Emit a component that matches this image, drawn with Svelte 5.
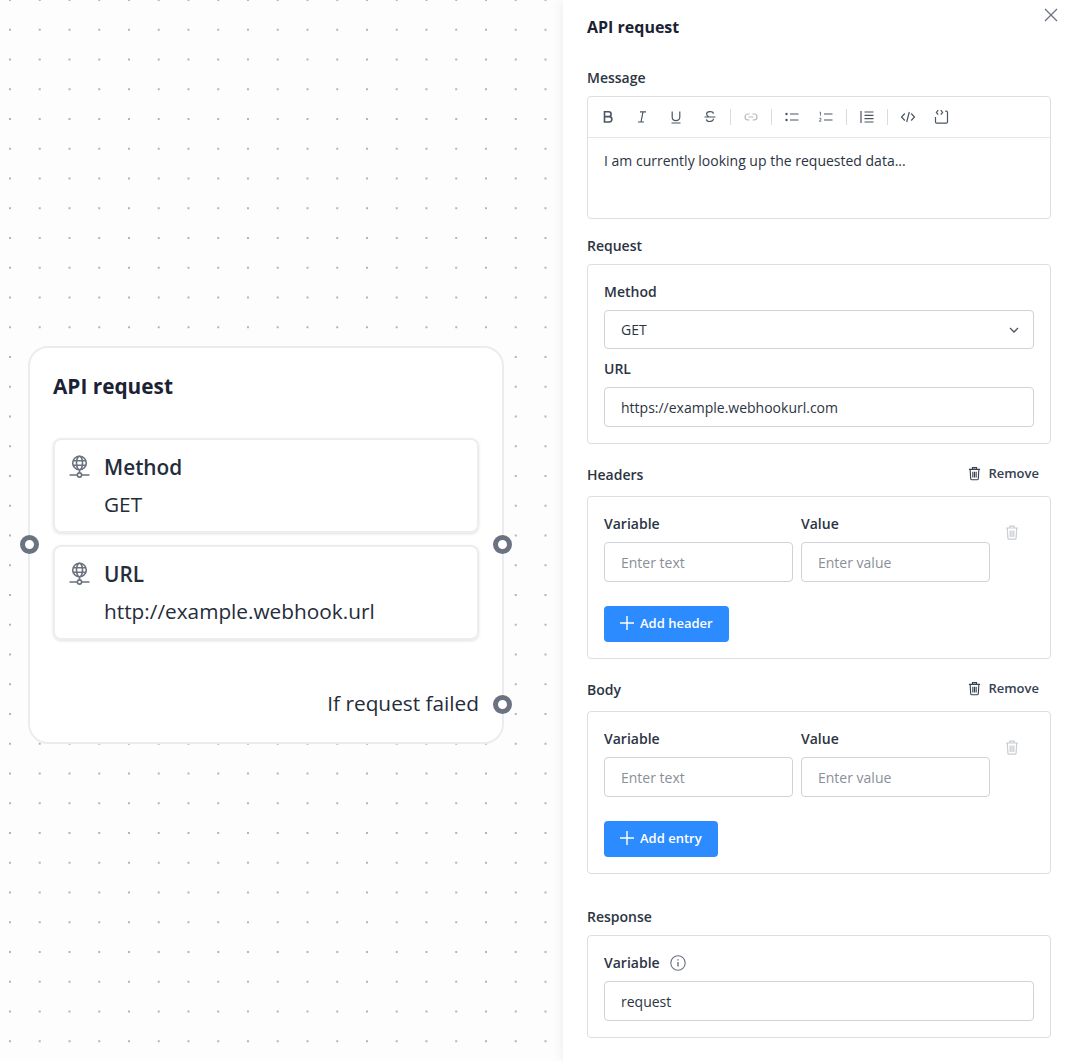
<script>
  const toolbar = [
    ["bold", "italic", "underline", "strike"],
    ["link"],
    ["ul", "ol"],
    ["quote"],
    ["code", "block"],
  ];
</script>

{#snippet globe()}
  <svg class="globe" width="21" height="23" viewBox="0 0 21 23" fill="none" stroke="#6b7280" stroke-width="1.6">
    <circle cx="10.5" cy="8" r="6.8" />
    <ellipse cx="10.5" cy="8" rx="3" ry="6.8" />
    <path d="M4.1 5.8h12.8M4.1 10.2h12.8M10.5 15v3" />
    <path d="M0.5 20h7.5M13 20h7.5" />
    <circle cx="10.5" cy="20" r="2.1" />
  </svg>
{/snippet}

{#snippet trash(cls)}
  <svg class={cls} width="14" height="15" viewBox="0 0 14 15" fill="none" stroke="currentColor" stroke-width="1.2">
    <path d="M1 3h12M4.8 3V1.2h4.4V3" />
    <path d="M2.3 3l.6 10.2c0 .6.5 1 1 1h6.2c.5 0 1-.4 1-1L11.7 3" />
    <path d="M5.2 5.5v6.4M7 5.5v6.4M8.8 5.5v6.4" />
  </svg>
{/snippet}

{#snippet plus()}
  <svg width="14" height="14" viewBox="0 0 14 14" stroke="#fff" stroke-width="1.4"><path d="M7 0v14M0 7h14" /></svg>
{/snippet}

{#snippet toolIcon(name)}
  <svg class="tool" width="16" height="16" viewBox="0 0 16 16" fill="none" stroke={name === "link" ? "#b4b9c2" : "#4b5563"} stroke-width="1.2">
    {#if name === "bold"}
      <path stroke-width="1.6" d="M4.5 2.8h4.2c3.2 0 3.2 4.8 0 4.8H4.5zM4.5 7.6h4.8c3.4 0 3.4 5.4 0 5.4H4.5z" />
    {:else if name === "italic"}
      <path d="M6 2.8h6M4 13h6M9 2.8 7 13" />
    {:else if name === "underline"}
      <path d="M4.2 2.5v5.8c0 4.4 7.6 4.4 7.6 0V2.5M3.5 14h9" />
    {:else if name === "strike"}
      <path d="M2.5 8h11M11.5 4.6C10.8 2 4.6 2 4.6 5c0 1.2.8 2 2 2.6M11.4 9.6c.6 3-6.4 4.2-7 .8" />
    {:else if name === "link"}
      <path d="M6.5 5H5a3 3 0 0 0 0 6h1.5M9.5 5H11a3 3 0 0 1 0 6H9.5M5.5 8h5" />
    {:else if name === "ul"}
      <path d="M6 5h8.5M6 11h8.5" />
      <circle cx="2.5" cy="5" r="1.2" fill="#4b5563" stroke="none" />
      <circle cx="2.5" cy="11" r="1.2" fill="#4b5563" stroke="none" />
    {:else if name === "ol"}
      <path d="M6 5h8.5M6 11h8.5" />
      <path stroke-width=".8" d="M1.5 3.2h1v3.4M1.4 9.6c1-.8 2-.3 1.6.6l-1.6 2h2" />
    {:else if name === "quote"}
      <path d="M2 2v12M5.5 3h9M5.5 6.3h9M5.5 9.6h9M5.5 13h9" />
    {:else if name === "code"}
      <path d="M4.8 4.5 1.5 8l3.3 3.5M11.2 4.5 14.5 8l-3.3 3.5M9.3 3 6.7 13" />
    {:else}
      <path d="M1.5 8v5c0 .8.4 1.2 1.2 1.2h9.6c.8 0 1.2-.4 1.2-1.2V3.4c0-.7-.4-1.2-1.2-1.2h-1" />
      <path d="M4.2 1.2 2.4 3.4l1.8 2.2M6.8 1.2l1.8 2.2-1.8 2.2" />
    {/if}
  </svg>
{/snippet}

{#snippet kvRows()}
  <div class="kv">
    <div class="field">
      <span class="label">Variable</span>
      <div class="input placeholder">Enter text</div>
    </div>
    <div class="field">
      <span class="label">Value</span>
      <div class="input placeholder">Enter value</div>
    </div>
    {@render trash("row-trash")}
  </div>
{/snippet}

<div class="page">
  <div class="canvas">
    <div class="node">
      <h2>API request</h2>
      <div class="card">
        <div class="card-head">{@render globe()}<span>Method</span></div>
        <div class="card-value">GET</div>
      </div>
      <div class="card">
        <div class="card-head">{@render globe()}<span>URL</span></div>
        <div class="card-value">http://example.webhook.url</div>
      </div>
      <div class="failed">If request failed</div>
      <span class="port port-left"></span>
      <span class="port port-right"></span>
      <span class="port port-fail"></span>
    </div>
  </div>

  <aside class="panel">
    <svg class="close" width="14" height="14" viewBox="0 0 14 14" stroke="#6b7280" stroke-width="1.3"><path d="M1 1l12 12M13 1 1 13" /></svg>
    <h1>API request</h1>

    <div class="section-head first">Message</div>
    <div class="editor">
      <div class="toolbar">
        {#each toolbar as group, i}
          {#if i > 0}<span class="divider"></span>{/if}
          {#each group as name}
            {@render toolIcon(name)}
          {/each}
        {/each}
      </div>
      <div class="editor-body">I am currently looking up the requested data...</div>
    </div>

    <div class="section-head">Request</div>
    <div class="box request">
      <span class="label">Method</span>
      <div class="input select">
        GET
        <svg width="10" height="6" viewBox="0 0 10 6" fill="none" stroke="#4b5563" stroke-width="1.3"><path d="M1 1l4 4 4-4" /></svg>
      </div>
      <span class="label url-label">URL</span>
      <div class="input">https://example.webhookurl.com</div>
    </div>

    <div class="section-head with-action">
      Headers
      <span class="remove">{@render trash("remove-trash")}Remove</span>
    </div>
    <div class="box">
      {@render kvRows()}
      <button class="add">{@render plus()}Add header</button>
    </div>

    <div class="section-head with-action">
      Body
      <span class="remove">{@render trash("remove-trash")}Remove</span>
    </div>
    <div class="box">
      {@render kvRows()}
      <button class="add">{@render plus()}Add entry</button>
    </div>

    <div class="section-head response">Response</div>
    <div class="box">
      <span class="label">
        Variable
        <svg class="info" width="16" height="16" viewBox="0 0 16 16" fill="none" stroke="#6b7280" stroke-width="1.1">
          <circle cx="8" cy="8" r="7.2" />
          <path stroke-width="1.4" d="M8 7v4.6M8 4.2v1.4" />
        </svg>
      </span>
      <div class="input">request</div>
    </div>
  </aside>
</div>

<style>
  :global(body) {
    margin: 0;
    font-family: "Open Sans", "Liberation Sans", sans-serif;
    color: #1f2937;
  }

  .page {
    display: flex;
    width: 1072px;
    height: 1061px;
    overflow: hidden;
  }

  .canvas {
    position: relative;
    flex: 1;
    background-color: #fdfdfd;
    background-image: radial-gradient(circle, #b4b4b4 0.9px, transparent 1.1px);
    background-size: 29.75px 29.75px;
    background-position: -4.9px -14.9px;
  }

  .node {
    position: absolute;
    left: 28px;
    top: 346px;
    box-sizing: border-box;
    width: 476px;
    height: 398px;
    padding: 23px;
    background: #fff;
    border: 2px solid #ebecee;
    border-radius: 20px;
  }

  h2 {
    margin: 0 0 37px;
    font-size: 20.8px;
    line-height: 30px;
    font-weight: 700;
    color: #1a2233;
  }

  .card {
    box-sizing: border-box;
    height: 95px;
    margin-bottom: 12px;
    padding: 12px 14px;
    border: 2px solid #ededef;
    border-radius: 8px;
    box-shadow: 0 1px 3px rgba(0, 0, 0, 0.12);
  }

  .card-head {
    display: flex;
    align-items: center;
    gap: 14px;
    height: 30px;
    font-size: 20.8px;
    font-weight: 600;
    color: #252c3b;
  }

  .globe {
    margin-top: -2px;
  }

  .card-value {
    margin: 7px 0 0 35px;
    font-size: 20.8px;
    line-height: 30px;
    color: #252c3b;
  }

  .failed {
    margin-top: 48px;
    text-align: right;
    font-size: 20.8px;
    line-height: 30px;
    color: #252c3b;
  }

  .port {
    position: absolute;
    box-sizing: border-box;
    width: 19px;
    height: 19px;
    border: 5px solid #6b7280;
    border-radius: 50%;
    background: #fff;
  }

  .port-left { left: -10px; top: 187px; }
  .port-right { right: -10px; top: 187px; }
  .port-fail { right: -10px; top: 346.5px; }

  .panel {
    position: relative;
    box-sizing: border-box;
    width: 509px;
    padding: 14px 21px 0 24px;
    background: #fff;
    box-shadow: 0 0 12px rgba(0, 0, 0, 0.08);
    z-index: 1;
  }

  .close {
    position: absolute;
    top: 8px;
    right: 14px;
  }

  h1 {
    margin: 0;
    font-size: 16px;
    line-height: 26px;
    font-weight: 700;
    color: #1a2233;
  }

  .section-head {
    margin: 17px 0 8px;
    font-size: 14px;
    line-height: 20px;
    font-weight: 600;
    color: #2b3442;
  }

  .section-head.first { margin-top: 28px; }
  .section-head.response { margin-top: 33px; margin-bottom: 8px; }

  .with-action {
    display: flex;
    justify-content: space-between;
    align-items: center;
    margin-top: 21px;
    margin-bottom: 11px;
    padding-right: 12px;
  }

  .remove {
    display: flex;
    align-items: center;
    gap: 7px;
    margin-top: -4px;
    font-size: 13px;
    font-weight: 600;
    color: #374151;
  }

  .remove-trash { color: #374151; width: 13px; }
  .row-trash { color: #c9ccd1; margin: 12px 0 0 7px; }

  .editor, .box {
    box-sizing: border-box;
    border: 1px solid #dcdee2;
    border-radius: 4px;
  }

  .editor { height: 123px; }

  .toolbar {
    display: flex;
    align-items: center;
    gap: 18px;
    height: 40px;
    padding-left: 12px;
    border-bottom: 1px solid #e5e7eb;
  }

  .tool { flex: none; }

  .divider {
    width: 1px;
    height: 16px;
    margin: 0 -6px;
    background: #d9dbdf;
  }

  .editor-body {
    padding: 13px 16px;
    font-size: 14px;
    line-height: 20px;
    color: #2b3442;
  }

  .box {
    padding: 16px;
  }

  .label {
    display: flex;
    align-items: center;
    gap: 10px;
    margin-bottom: 7px;
    font-size: 14px;
    line-height: 22px;
    font-weight: 600;
    color: #2b3442;
  }

  .url-label { margin: 9px 0 7px; }

  .input {
    display: flex;
    align-items: center;
    justify-content: space-between;
    box-sizing: border-box;
    height: 40px;
    padding: 0 16px;
    border: 1px solid #cfd2d6;
    border-radius: 4px;
    font-size: 14px;
    color: #2b3442;
  }

  .input.select { height: 39px; padding-right: 14px; }

  .placeholder {
    color: #8a8f98;
  }

  .request { height: 180px; }

  .kv {
    display: flex;
    align-items: flex-start;
    gap: 8px;
  }

  .kv .field {
    width: 189px;
  }

  .add {
    display: flex;
    align-items: center;
    gap: 6px;
    height: 36px;
    margin-top: 24px;
    padding: 0 16px 2px;
    border: none;
    border-radius: 4px;
    background: #2c8cff;
    color: #fff;
    font-family: inherit;
    font-size: 13px;
    font-weight: 600;
  }
</style>
